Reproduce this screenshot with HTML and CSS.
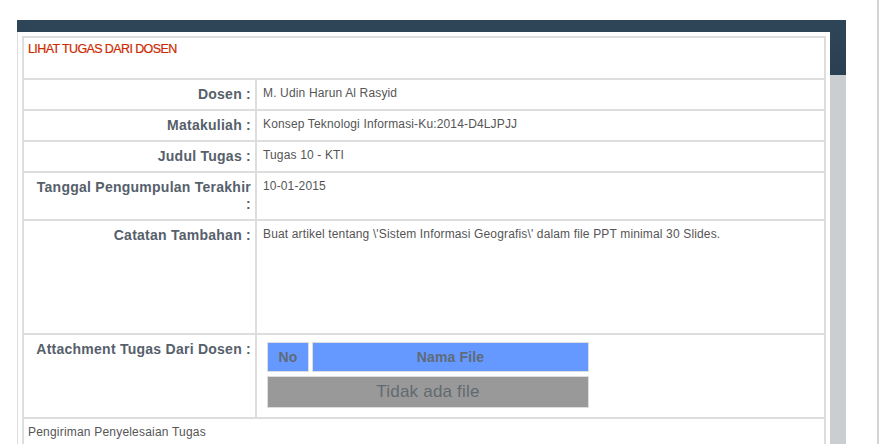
FILE: index.html
```html
<!DOCTYPE html>
<html>
<head>
<meta charset="utf-8">
<link rel="stylesheet" href="styles.css">
</head>
<body>
<div class="page">
  <div class="main">
    <div class="topbar"></div>
    <div class="body-row">
      <div class="panel">
        <table class="detail">
          <tr>
            <td class="title-cell" colspan="2">LIHAT TUGAS DARI DOSEN</td>
          </tr>
          <tr>
            <td class="label">Dosen :</td>
            <td class="value">M. Udin Harun Al Rasyid</td>
          </tr>
          <tr>
            <td class="label">Matakuliah :</td>
            <td class="value">Konsep Teknologi Informasi-Ku:2014-D4LJPJJ</td>
          </tr>
          <tr>
            <td class="label">Judul Tugas :</td>
            <td class="value">Tugas 10 - KTI</td>
          </tr>
          <tr>
            <td class="label">Tanggal Pengumpulan Terakhir<br>:</td>
            <td class="value">10-01-2015</td>
          </tr>
          <tr>
            <td class="label">Catatan Tambahan :</td>
            <td class="value"><div class="note">Buat artikel tentang \'Sistem Informasi Geografis\' dalam file PPT minimal 30 Slides.</div></td>
          </tr>
          <tr>
            <td class="label">Attachment Tugas Dari Dosen :</td>
            <td class="value attach">
              <table class="files">
                <tr>
                  <th class="col-no">No</th>
                  <th class="col-name">Nama File</th>
                </tr>
                <tr>
                  <td class="empty" colspan="2">Tidak ada file</td>
                </tr>
              </table>
            </td>
          </tr>
          <tr>
            <td class="footer-cell" colspan="2">Pengiriman Penyelesaian Tugas</td>
          </tr>
        </table>
      </div>
      <div class="scroll">
        <div class="thumb"></div>
      </div>
    </div>
  </div>
  <div class="edge"></div>
</div>
</body>
</html>
```

FILE: styles.css
```css
html, body {
  margin: 0;
  padding: 0;
  background: #ffffff;
  overflow: hidden;
}

body {
  font-family: "Liberation Sans", Arial, sans-serif;
}

.page {
  display: flex;
  align-items: flex-start;
  height: 444px;
  width: 882px;
  overflow: hidden;
}

.main {
  flex: none;
  padding: 20px 0 0 17px;
  width: 829px;
  display: flex;
  flex-direction: column;
}

.topbar {
  flex: none;
  height: 12px;
  background: #2e4457;
}

.body-row {
  flex: none;
  display: flex;
  min-height: 440px;
}

.panel {
  flex: none;
  width: 804px;
  border-left: 1px solid #dddddd;
  padding: 4px 4px 0 4px;
  background: #ffffff;
}

.scroll {
  flex: none;
  width: 16px;
  background: #cbced1;
}

.thumb {
  height: 43px;
  background: linear-gradient(#2e4457, #2b3f52);
}

.edge {
  flex: none;
  margin-left: 31px;
  width: 2px;
  height: 444px;
  background: #d4d4d4;
}

.detail {
  width: 804px;
  border: 1px solid #dddddd;
  border-spacing: 0;
  border-collapse: separate;
}

.detail > tbody > tr > td {
  border: 1px solid #dddddd;
  vertical-align: top;
}

.title-cell {
  padding: 4px 4px 21px 4px;
  font-size: 12.5px;
  line-height: 15px;
  letter-spacing: -0.6px;
  color: #cc2a00;
  -webkit-text-stroke: 0.2px #cc2a00;
}

.label {
  width: 222px;
  padding: 6px 4px 6px 5px;
  text-align: right;
  font-size: 14px;
  font-weight: bold;
  line-height: 17px;
  letter-spacing: 0.25px;
  color: #56606b;
}

.value {
  padding: 6px 6px 6px 6px;
  font-size: 12px;
  line-height: 14px;
  letter-spacing: 0.15px;
  color: #555555;
}

.note {
  height: 100px;
}

.value.attach {
  padding: 3px 6px 5px 7px;
}

.files {
  border-spacing: 3px 4px;
}

.files th {
  background: #6699ff;
  border: 1px solid #dddddd;
  height: 28px;
  padding: 0;
  font-size: 14px;
  font-weight: bold;
  color: #5f6b77;
  text-align: center;
  vertical-align: middle;
}

.col-no {
  width: 40px;
}

.col-name {
  width: 275px;
}

.files td.empty {
  background: #999999;
  border: 1px solid #dddddd;
  height: 30px;
  padding: 0;
  font-size: 17px;
  letter-spacing: 0.2px;
  color: #626a70;
  text-align: center;
  vertical-align: middle;
}

.footer-cell {
  padding: 6px 4px;
  font-size: 12px;
  line-height: 14px;
  letter-spacing: 0.2px;
  color: #555555;
}
```
